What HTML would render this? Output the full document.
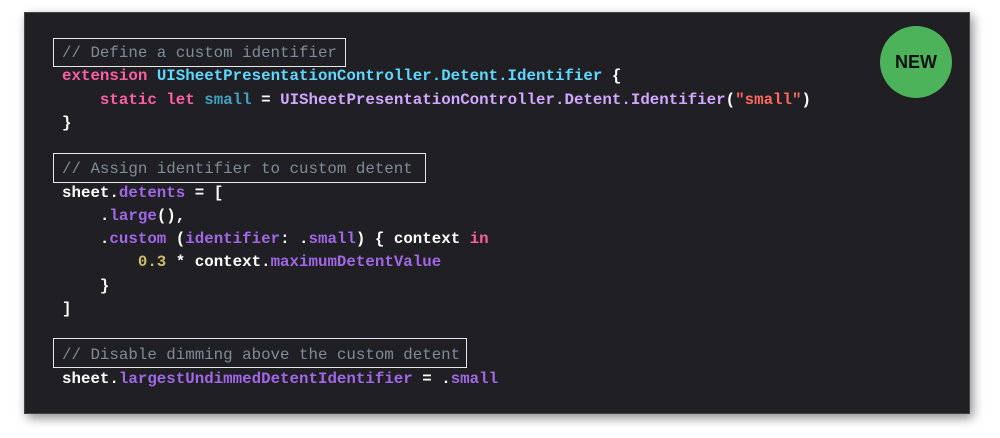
<!DOCTYPE html>
<html><head><style>
html,body{margin:0;padding:0;background:#fff;width:1000px;height:438px;overflow:hidden}
.panel{position:absolute;left:24px;top:12px;width:944px;height:400px;background:#1f1f24;box-shadow:3px 4px 10px rgba(0,0,0,.45);border:1px solid #444}
pre{position:absolute;left:37px;top:29px;margin:0;font-family:"Liberation Mono",monospace;font-size:15.8px;line-height:23.25px;color:#fff;font-weight:bold}
.c{color:#7f8c98;font-weight:normal}
.k{color:#fc5fa3}
.t{color:#5dd8ff}
.s{color:#41a1c0}
.p{color:#a167e6}
.l{color:#d0a8ff}
.r{color:#fc6a5d}
.n{color:#d0bf69}
.box{position:absolute;border:1.5px solid #e8e8e8}
.new{position:absolute;left:880px;top:26px;width:72px;height:72px;border-radius:50%;background:#4cb35a;color:#111;font:bold 18px "Liberation Sans",sans-serif;display:flex;align-items:center;justify-content:center}
</style></head><body>
<div class="panel">
<pre><span class="c">// Define a custom identifier</span>
<span class="k">extension</span> <span class="t">UISheetPresentationController.Detent.Identifier</span> {
    <span class="k">static</span> <span class="k">let</span> <span class="s">small</span> = <span class="l">UISheetPresentationController.Detent.Identifier</span>(<span class="r">"small"</span>)
}

<span class="c">// Assign identifier to custom detent</span>
sheet.<span class="p">detents</span> = [
    .<span class="p">large</span>(),
    .<span class="p">custom</span> (<span class="p">identifier</span>: .<span class="p">small</span>) { context <span class="k">in</span>
        <span class="n">0.3</span> * context.<span class="p">maximumDetentValue</span>
    }
]

<span class="c">// Disable dimming above the custom detent</span>
sheet.<span class="p">largestUndimmedDetentIdentifier</span> = .<span class="p">small</span></pre>
</div>
<div class="box" style="left:53px;top:38px;width:291px;height:27px"></div>
<div class="box" style="left:53px;top:153px;width:371px;height:28px"></div>
<div class="box" style="left:53px;top:338px;width:412px;height:28px"></div>
<div class="new">NEW</div>
</body></html>
